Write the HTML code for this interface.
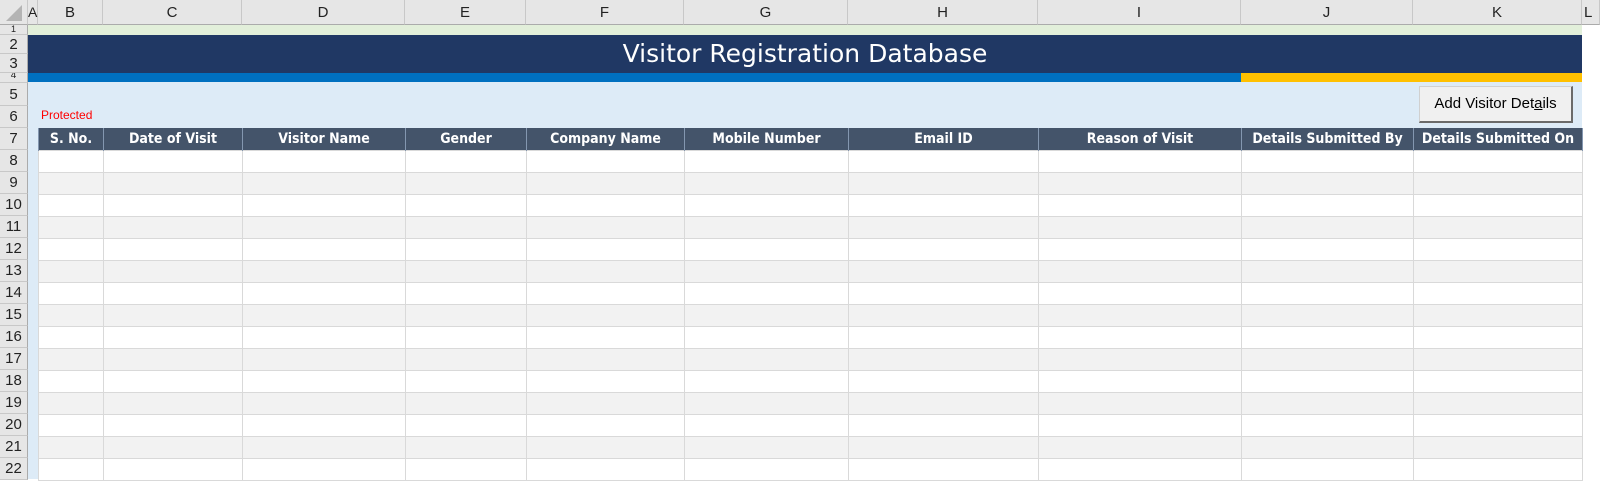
<!DOCTYPE html>
<html><head><meta charset="utf-8"><style>
*{margin:0;padding:0;box-sizing:border-box}
body{width:1600px;height:479px;overflow:hidden;background:#fff;position:relative;font-family:"Liberation Sans",sans-serif}
.a{position:absolute}
.ch{position:absolute;top:0;height:25px;background:#e6e6e6;border-right:1px solid #c8c8c8;border-bottom:1px solid #ababab;font-size:15px;color:#222;text-align:center;line-height:25px}
.rh{position:absolute;left:0;width:28px;background:#e6e6e6;border-bottom:1px solid #c8c8c8;border-right:1px solid #ababab;font-size:15px;color:#222;text-align:center}
table{border-collapse:collapse;table-layout:fixed}
td{height:22px;border:1px solid #d9d9d9;padding:0;background:#fff}
tr.h td{background:#44546a;color:#fff;font-weight:bold;font-size:14px;text-align:center;border:1px solid #8497b0;border-top:none;border-bottom:none;font-family:"DejaVu Sans Condensed","Liberation Sans",sans-serif}
tr:nth-child(odd):not(.h) td{background:#f2f2f2}
</style></head><body>
<div class="ch" style="left:0;width:28px"><svg width="20" height="20" style="position:absolute;left:4px;top:3px"><polygon points="18,2 18,18 2,18" fill="#b4b4b4"/></svg></div>
<div class="ch" style="left:28px;width:10px;font-size:14px">A</div>
<div class="ch" style="left:38px;width:65px">B</div>
<div class="ch" style="left:103px;width:139px">C</div>
<div class="ch" style="left:242px;width:163px">D</div>
<div class="ch" style="left:405px;width:121px">E</div>
<div class="ch" style="left:526px;width:158px">F</div>
<div class="ch" style="left:684px;width:164px">G</div>
<div class="ch" style="left:848px;width:190px">H</div>
<div class="ch" style="left:1038px;width:203px">I</div>
<div class="ch" style="left:1241px;width:172px">J</div>
<div class="ch" style="left:1413px;width:169px">K</div>
<div class="ch" style="left:1582px;width:18px;text-align:left;padding-left:2px">L</div>
<div class="a" style="left:28px;top:25px;width:1554px;height:10px;background:#e2efda"></div>
<div class="a" style="left:28px;top:35px;width:1554px;height:38px;background:#203864;color:#fff;font-size:25px;text-align:center;line-height:38px;font-family:'DejaVu Sans','Liberation Sans',sans-serif">Visitor Registration Database</div>
<div class="a" style="left:28px;top:73px;width:1213px;height:9px;background:#0070c0"></div>
<div class="a" style="left:1241px;top:73px;width:341px;height:9px;background:#ffc000"></div>
<div class="a" style="left:28px;top:82px;width:1554px;height:397px;background:#ddebf7"></div>
<div class="a" style="left:41px;top:108px;font-size:12px;color:#ff0000">Protected</div>
<div class="a" style="left:1419px;top:86px;width:154px;height:37px;background:#f0f0f0;border:1px solid #d0d0d0;border-right:2px solid #6a6a6a;border-bottom:2px solid #6a6a6a;font-size:15px;text-align:center;line-height:34px;color:#000">Add Visitor Det<u>a</u>ils</div>
<div class="rh" style="top:25px;height:10px;font-size:9px;line-height:8px;overflow:hidden">1</div>
<div class="rh" style="top:35px;height:19px;line-height:19px">2</div>
<div class="rh" style="top:54px;height:19px;line-height:19px">3</div>
<div class="rh" style="top:73px;height:10px;font-size:10px;line-height:6px;overflow:hidden">4</div>
<div class="rh" style="top:83px;height:23px;line-height:23px">5</div>
<div class="rh" style="top:106px;height:22px;line-height:22px">6</div>
<div class="rh" style="top:128px;height:22px;line-height:22px">7</div>
<div class="rh" style="top:150px;height:22px;line-height:22px">8</div>
<div class="rh" style="top:172px;height:22px;line-height:22px">9</div>
<div class="rh" style="top:194px;height:22px;line-height:22px">10</div>
<div class="rh" style="top:216px;height:22px;line-height:22px">11</div>
<div class="rh" style="top:238px;height:22px;line-height:22px">12</div>
<div class="rh" style="top:260px;height:22px;line-height:22px">13</div>
<div class="rh" style="top:282px;height:22px;line-height:22px">14</div>
<div class="rh" style="top:304px;height:22px;line-height:22px">15</div>
<div class="rh" style="top:326px;height:22px;line-height:22px">16</div>
<div class="rh" style="top:348px;height:22px;line-height:22px">17</div>
<div class="rh" style="top:370px;height:22px;line-height:22px">18</div>
<div class="rh" style="top:392px;height:22px;line-height:22px">19</div>
<div class="rh" style="top:414px;height:22px;line-height:22px">20</div>
<div class="rh" style="top:436px;height:22px;line-height:22px">21</div>
<div class="rh" style="top:458px;height:22px;line-height:22px">22</div>
<table class="a" style="left:38px;top:128px;width:1544px">
<colgroup><col style="width:65px"><col style="width:139px"><col style="width:163px"><col style="width:121px"><col style="width:158px"><col style="width:164px"><col style="width:190px"><col style="width:203px"><col style="width:172px"><col style="width:169px"></colgroup>
<tr class="h"><td>S. No.</td><td>Date of Visit</td><td>Visitor Name</td><td>Gender</td><td>Company Name</td><td>Mobile Number</td><td>Email ID</td><td>Reason of Visit</td><td>Details Submitted By</td><td>Details Submitted On</td></tr>
<tr><td></td><td></td><td></td><td></td><td></td><td></td><td></td><td></td><td></td><td></td></tr>
<tr><td></td><td></td><td></td><td></td><td></td><td></td><td></td><td></td><td></td><td></td></tr>
<tr><td></td><td></td><td></td><td></td><td></td><td></td><td></td><td></td><td></td><td></td></tr>
<tr><td></td><td></td><td></td><td></td><td></td><td></td><td></td><td></td><td></td><td></td></tr>
<tr><td></td><td></td><td></td><td></td><td></td><td></td><td></td><td></td><td></td><td></td></tr>
<tr><td></td><td></td><td></td><td></td><td></td><td></td><td></td><td></td><td></td><td></td></tr>
<tr><td></td><td></td><td></td><td></td><td></td><td></td><td></td><td></td><td></td><td></td></tr>
<tr><td></td><td></td><td></td><td></td><td></td><td></td><td></td><td></td><td></td><td></td></tr>
<tr><td></td><td></td><td></td><td></td><td></td><td></td><td></td><td></td><td></td><td></td></tr>
<tr><td></td><td></td><td></td><td></td><td></td><td></td><td></td><td></td><td></td><td></td></tr>
<tr><td></td><td></td><td></td><td></td><td></td><td></td><td></td><td></td><td></td><td></td></tr>
<tr><td></td><td></td><td></td><td></td><td></td><td></td><td></td><td></td><td></td><td></td></tr>
<tr><td></td><td></td><td></td><td></td><td></td><td></td><td></td><td></td><td></td><td></td></tr>
<tr><td></td><td></td><td></td><td></td><td></td><td></td><td></td><td></td><td></td><td></td></tr>
<tr><td></td><td></td><td></td><td></td><td></td><td></td><td></td><td></td><td></td><td></td></tr>
</table>
</body></html>
